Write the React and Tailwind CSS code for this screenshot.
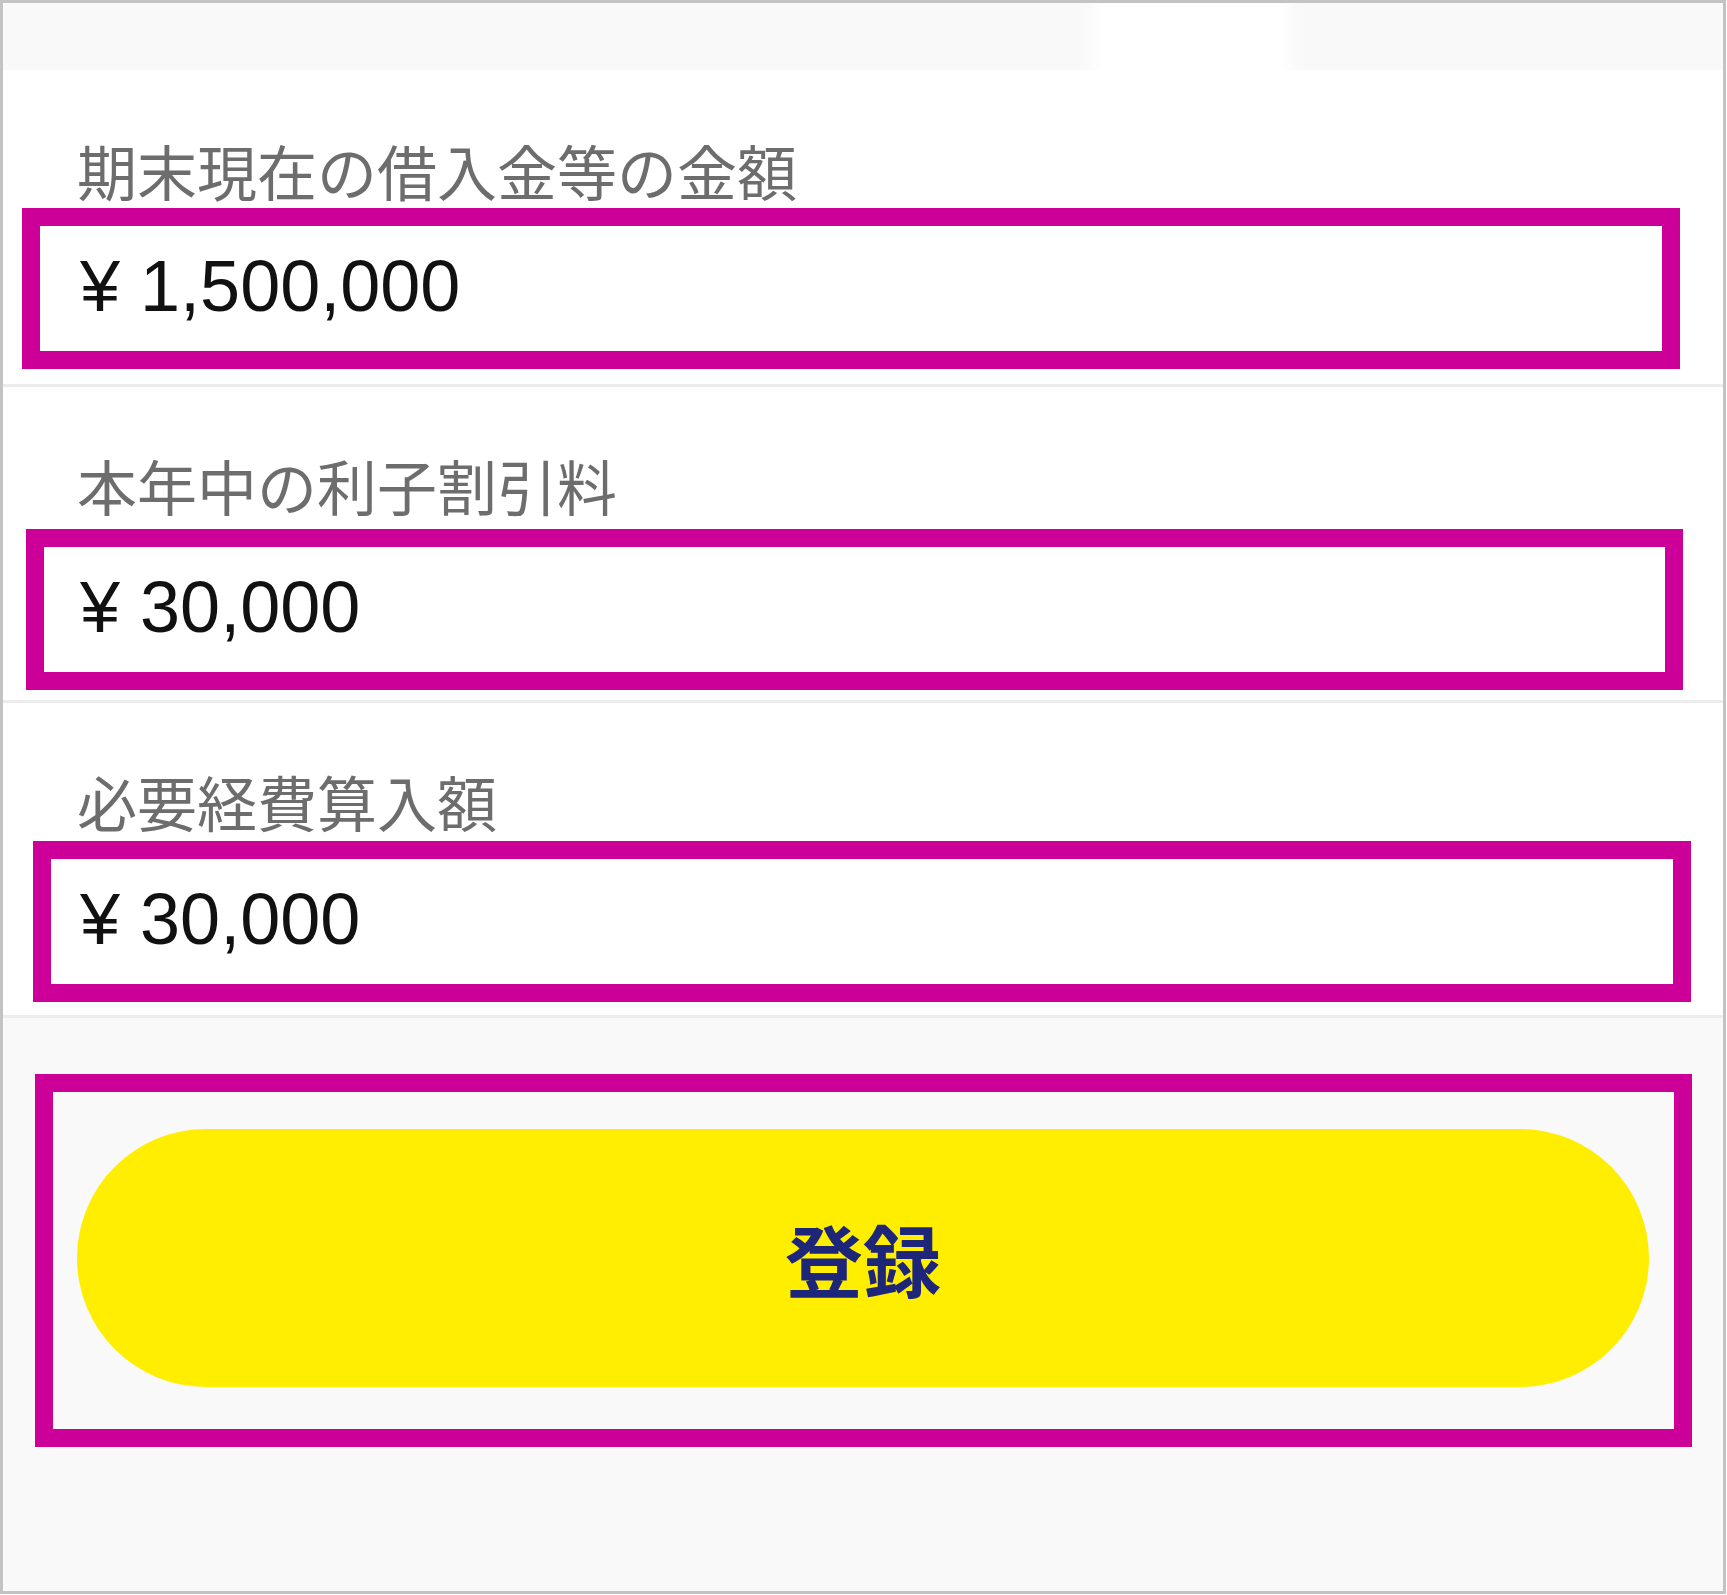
import React from "react";

const jp = { fontFamily: '"Noto Sans CJK JP", "Noto Sans", sans-serif' };
const num = { fontFamily: '"Liberation Sans", Arial, sans-serif' };

function Field({ label, value, pt, gap, pb, ml, w, pl }) {
  return (
    <div className="bg-white" style={{ paddingTop: pt, paddingBottom: pb }}>
      <div
        className="pl-[74px] text-[60px] leading-[60px] text-[#6d6d6d] whitespace-nowrap"
        style={jp}
      >
        {label}
      </div>
      <div
        className="h-[161px] border-[18px] border-[#cc0099] bg-white flex items-center"
        style={{ marginTop: gap, marginLeft: ml, width: w, paddingLeft: pl }}
      >
        <span className="text-[72px] leading-none text-[#111111] pb-[6px]" style={num}>
          {value}
        </span>
      </div>
    </div>
  );
}

export default function App() {
  return (
    <div className="w-[1726px] h-[1594px] border-[3px] border-[#c3c3c3] bg-[#f9f9f9] flex flex-col overflow-hidden">
      {/* top band */}
      <div className="h-[67px] bg-[#f9f9f9] flex shrink-0">
        <div className="ml-[1082px] w-[18px] h-full bg-gradient-to-r from-[#f9f9f9] to-white" />
        <div className="w-[178px] h-full bg-white" />
        <div className="w-[18px] h-full bg-gradient-to-r from-white to-[#f9f9f9]" />
      </div>

      <Field
        label="期末現在の借入金等の金額"
        value="¥ 1,500,000"
        pt="70px"
        gap="8px"
        pb="15px"
        ml="19px"
        w="1658px"
        pl="40px"
      />
      <div className="h-[3px] bg-[#ececec] shrink-0" />
      <Field
        label="本年中の利子割引料"
        value="¥ 30,000"
        pt="68px"
        gap="14px"
        pb="10px"
        ml="23px"
        w="1657px"
        pl="36px"
      />
      <div className="h-[3px] bg-[#ececec] shrink-0" />
      <Field
        label="必要経費算入額"
        value="¥ 30,000"
        pt="68px"
        gap="10px"
        pb="13px"
        ml="30px"
        w="1658px"
        pl="29px"
      />
      <div className="h-[3px] bg-[#ececec] shrink-0" />

      {/* bottom area */}
      <div className="flex-1 bg-[#f9f9f9] pt-[56px]">
        <div className="ml-[32px] w-[1657px] h-[373px] border-[18px] border-[#cc0099] pt-[37px] pl-[24px] pr-[25px]">
          <button
            type="button"
            className="w-full h-[258px] rounded-full bg-[#ffee00] flex items-center justify-center"
          >
            <span className="text-[78px] leading-none font-bold text-[#1d2678]" style={jp}>
              登録
            </span>
          </button>
        </div>
      </div>
    </div>
  );
}
